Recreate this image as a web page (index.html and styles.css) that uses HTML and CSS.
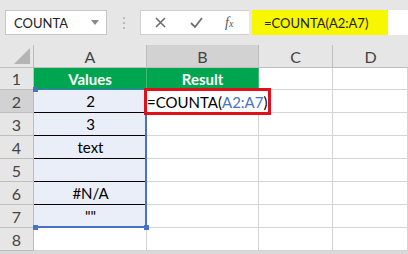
FILE: index.html
```html
<!DOCTYPE html>
<html lang="en">
<head>
    <meta charset="UTF-8">
    <meta name="viewport" content="width=device-width, initial-scale=1.0">
    <title>COUNTA</title>
    <link rel="stylesheet" href="styles.css">
</head>
<body>
    <div class="toolbar">
        <div class="namebox">
            <span>COUNTA</span>
            <svg class="caret" width="8" height="5" viewBox="0 0 8 5"><path d="M0 0h8L4 5z" fill="#8a8a8a"/></svg>
        </div>
        <svg class="dots" width="4" height="14" viewBox="0 0 4 14">
            <circle cx="2" cy="2" r="1.1" fill="#b0b0b0"/>
            <circle cx="2" cy="7" r="1.1" fill="#b0b0b0"/>
            <circle cx="2" cy="12" r="1.1" fill="#b0b0b0"/>
        </svg>
        <div class="fbuttons">
            <svg width="11" height="11" viewBox="0 0 11 11"><path d="M1 1l9 9M10 1l-9 9" stroke="#6e6e6e" stroke-width="1.6"/></svg>
            <svg width="13" height="11" viewBox="0 0 13 11"><path d="M1 6l4 4 7-9" stroke="#6e6e6e" stroke-width="1.8" fill="none"/></svg>
            <span class="fx">f<sub>x</sub></span>
        </div>
        <div class="formula">
            <span class="highlight">=COUNTA(A2:A7)</span>
        </div>
    </div>

    <div class="sheet">
        <div class="corner"><svg width="16" height="16" viewBox="0 0 16 16"><path d="M16 0v16H0z" fill="#b4b4b4"/></svg></div>
        <div class="colhead">A</div>
        <div class="colhead active">B</div>
        <div class="colhead">C</div>
        <div class="colhead last">D</div>

        <div class="rowhead">1</div>
        <div class="cell green">Values</div>
        <div class="cell green">Result</div>
        <div class="cell"></div>
        <div class="cell"></div>

        <div class="rowhead active">2</div>
        <div class="cell sel first-sel">2
            <!-- range reference A2:A7 -->
            <div class="range">
                <span class="handle tl"></span>
                <span class="handle bl"></span>
                <span class="handle br"></span>
            </div>
        </div>
        <div class="cell edit-cell">
            <div class="editing">=COUNTA(<span class="ref">A2:A7</span>)<span class="caretline"></span></div>
        </div>
        <div class="cell"></div>
        <div class="cell"></div>

        <div class="rowhead">3</div>
        <div class="cell sel">3</div>
        <div class="cell"></div>
        <div class="cell"></div>
        <div class="cell"></div>

        <div class="rowhead">4</div>
        <div class="cell sel">text</div>
        <div class="cell"></div>
        <div class="cell"></div>
        <div class="cell"></div>

        <div class="rowhead">5</div>
        <div class="cell sel"></div>
        <div class="cell"></div>
        <div class="cell"></div>
        <div class="cell"></div>

        <div class="rowhead">6</div>
        <div class="cell sel">#N/A</div>
        <div class="cell"></div>
        <div class="cell"></div>
        <div class="cell"></div>

        <div class="rowhead">7</div>
        <div class="cell sel quotes">""</div>
        <div class="cell"></div>
        <div class="cell"></div>
        <div class="cell"></div>

        <div class="rowhead">8</div>
        <div class="cell"></div>
        <div class="cell"></div>
        <div class="cell"></div>
        <div class="cell"></div>
    </div>
</body>
</html>
```

FILE: styles.css
```css
body {
    margin: 0;
    padding: 0;
    width: 408px;
    height: 254px;
    overflow: hidden;
    background-color: #d9d9d9;
    font-family: Lato, "Open Sans", sans-serif;
    color: #000;
}

/* formula bar */
.toolbar {
    display: flex;
    align-items: center;
    height: 45px;
    box-sizing: border-box;
    padding: 10px 0 10px 5px;
    background-color: #e6e6e6;
}

.namebox {
    display: flex;
    align-items: center;
    justify-content: space-between;
    width: 102px;
    height: 25px;
    box-sizing: border-box;
    padding: 0 7px 0 8px;
    background-color: #fff;
    border: 1px solid #c6c6c6;
    font-size: 13px;
    color: #222;
}

.dots {
    margin: 0 14px 0 15px;
}

.fbuttons {
    display: flex;
    align-items: center;
    width: 109px;
    height: 25px;
    box-sizing: border-box;
    padding-left: 14px;
    gap: 24px;
    background-color: #fff;
    border: 1px solid #d0d0d0;
    border-right: none;
}

.fx {
    font-family: "Liberation Serif", serif;
    font-style: italic;
    font-size: 14px;
    color: #555;
    margin-left: -2px;
}

.fx sub {
    font-size: 10px;
    vertical-align: 0;
}

.formula {
    flex: 1;
    height: 25px;
    margin-left: 3px;
    background-color: #fff;
    display: flex;
}

.highlight {
    display: flex;
    align-items: center;
    width: 136px;
    box-sizing: border-box;
    padding-left: 12px;
    background-color: #f7f700;
    font-size: 13px;
    color: #222;
}

/* grid */
.sheet {
    display: grid;
    grid-template-columns: 34px 113px 112px 74px 75px;
    grid-template-rows: 23px 22px repeat(7, 23px);
    background-color: #fff;
    font-size: 15px;
}

.corner, .colhead, .rowhead, .cell {
    box-sizing: border-box;
    border-right: 1px solid #d4d4d4;
    border-bottom: 1px solid #d4d4d4;
    display: flex;
    align-items: center;
    justify-content: center;
}

.corner, .colhead, .rowhead {
    background-color: #e6e6e6;
    border-color: #bebebe;
    color: #444;
}

.corner {
    align-items: flex-end;
    justify-content: flex-end;
    padding: 0 3px 3px 0;
}

.colhead {
    font-size: 16px;
}

.colhead.last {
    border-right: none;
}

.colhead.active, .rowhead.active {
    background-color: #d2d2d2;
}

.rowhead {
    font-size: 16px;
}

.cell.green {
    background-color: #00a54f;
    color: #fff;
    font-weight: bold;
    border-right-color: #3fb874;
    border-bottom-color: #00a54f;
}

.cell.sel {
    background-color: #e9eef8;
    border-bottom: 1px solid #000;
    border-right: none;
}

.cell.quotes {
    align-items: flex-start;
    padding-top: 2px;
}

.first-sel, .edit-cell {
    position: relative;
}

.range {
    position: absolute;
    left: 0;
    top: -1px;
    width: 113px;
    height: 139px;
    box-sizing: border-box;
    border: 2px solid #4673c5;
    border-left: none;
    border-top-width: 1px;
    z-index: 1;
}

.handle {
    position: absolute;
    width: 5px;
    height: 5px;
    background-color: #4673c5;
}

.handle.tl { left: -1px; top: -3px; }
.handle.bl { left: -1px; bottom: -4px; }
.handle.br { right: -4px; bottom: -4px; }

.edit-cell {
    z-index: 2;
}

.editing {
    position: absolute;
    left: -3px;
    top: -2px;
    width: 127px;
    height: 27px;
    box-sizing: border-box;
    border: 3px solid #e0101b;
    background-color: #fff;
    display: flex;
    align-items: center;
    font-size: 15px;
}

.ref {
    color: #4673c5;
}

.caretline {
    display: inline-block;
    width: 1px;
    height: 17px;
    margin-left: 1px;
    background-color: #000;
}
```
